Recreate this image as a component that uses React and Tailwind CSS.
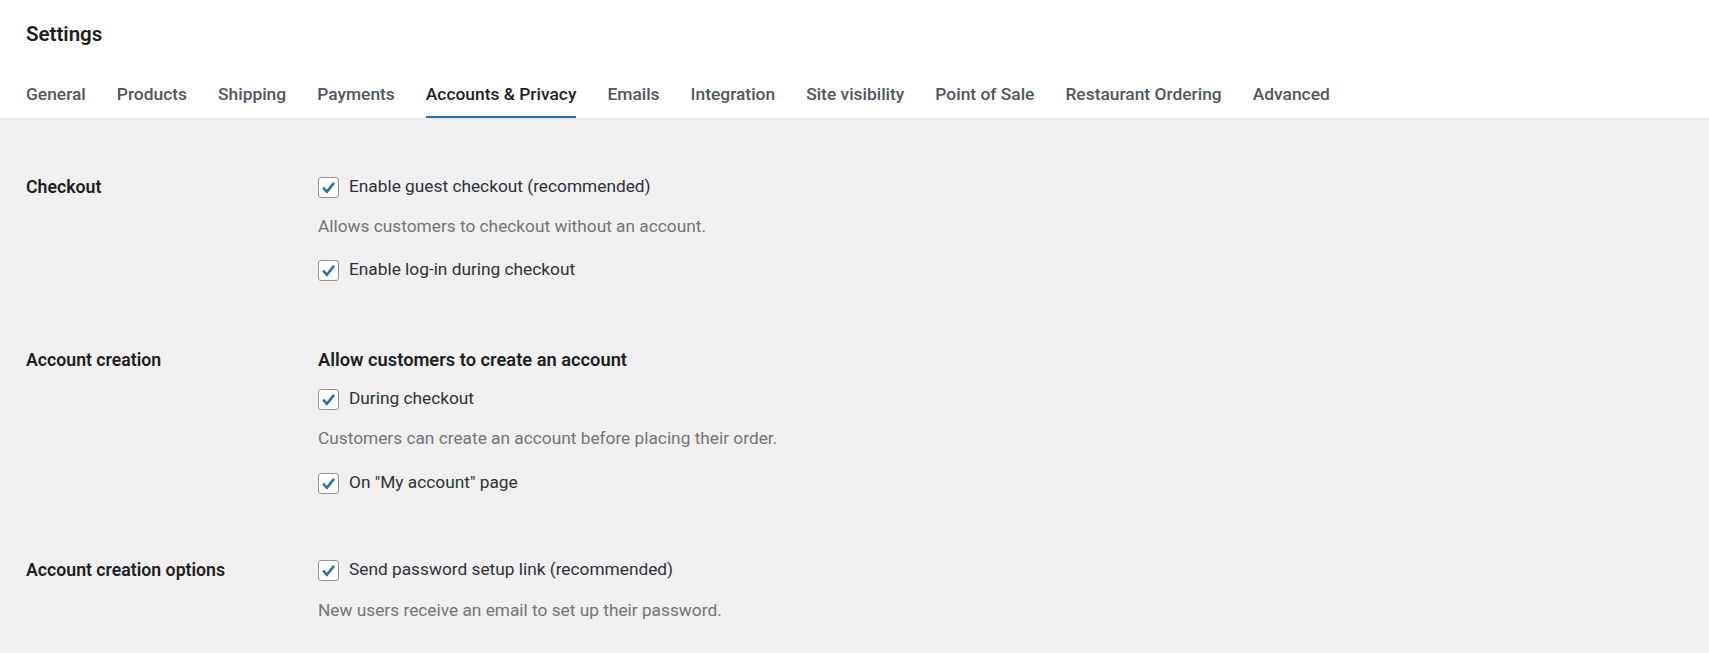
import React from "react";

const font = { fontFamily: 'Roboto, "Noto Sans", sans-serif' };

function Check() {
  return (
    <span className="flex h-[21px] w-[21px] shrink-0 items-center justify-center rounded-[3px] border border-[#949494] bg-white">
      <svg viewBox="0 0 21 21" className="h-[21px] w-[21px]">
        <path d="M4.6 10.6 L8.7 15.2 L16.6 5.4" fill="none" stroke="#2271b1" strokeWidth="2.8" strokeLinecap="butt" strokeLinejoin="miter" />
      </svg>
    </span>
  );
}

function CheckRow({ label, className = "" }) {
  return (
    <div className={"flex h-[28px] items-center gap-[10px] " + className}>
      <Check />
      <span className="text-[17.3px] text-[#2c3338]">{label}</span>
    </div>
  );
}

function Desc({ children, className = "" }) {
  return <div className={"flex h-[24px] items-center text-[17.3px] text-[#757575] " + className}>{children}</div>;
}

const tabs = [
  "General",
  "Products",
  "Shipping",
  "Payments",
  "Accounts & Privacy",
  "Emails",
  "Integration",
  "Site visibility",
  "Point of Sale",
  "Restaurant Ordering",
  "Advanced",
];

export default function App() {
  return (
    <div className="min-h-[653px] w-full bg-[#f0f0f0]" style={font}>
      <div className="border-b border-[#e6e6e6] bg-white px-[26px]">
        <div className="flex h-[50px] items-end text-[20.5px] font-semibold text-[#1e1e1e]">Settings</div>
        <div className="mt-[19px] flex h-[49px] gap-[31px]">
          {tabs.map((t) => {
            const active = t === "Accounts & Privacy";
            return (
              <div
                key={t}
                className={
                  "flex h-full items-center border-b-2 pt-[4px] text-[17.4px] font-medium " +
                  (active ? "border-[#2271b1] text-[#1e1e1e]" : "border-transparent text-[#50575e]")
                }
              >
                {t}
              </div>
            );
          })}
        </div>
      </div>

      <div className="px-[26px] pt-[54px]">
        <div className="grid grid-cols-[292px_1fr]">
          <div className="flex h-[28px] items-center text-[17.7px] font-semibold text-[#1e1e1e]">Checkout</div>
          <div className="flex flex-col">
            <CheckRow label="Enable guest checkout (recommended)" />
            <Desc className="mt-[14px]">Allows customers to checkout without an account.</Desc>
            <CheckRow label="Enable log-in during checkout" className="mt-[17px]" />
          </div>
        </div>

        <div className="mt-[62px] grid grid-cols-[292px_1fr]">
          <div className="flex h-[28px] items-center text-[17.7px] font-semibold text-[#1e1e1e]">Account creation</div>
          <div className="flex flex-col">
            <div className="flex h-[28px] items-center text-[18.3px] font-semibold text-[#1e1e1e]">Allow customers to create an account</div>
            <CheckRow label="During checkout" className="mt-[11px]" />
            <Desc className="mt-[14px]">Customers can create an account before placing their order.</Desc>
            <CheckRow label={'On "My account" page'} className="mt-[18px]" />
          </div>
        </div>

        <div className="mt-[59px] grid grid-cols-[292px_1fr]">
          <div className="flex h-[28px] items-center text-[17.7px] font-semibold text-[#1e1e1e]">Account creation options</div>
          <div className="flex flex-col">
            <CheckRow label="Send password setup link (recommended)" />
            <Desc className="mt-[15px]">New users receive an email to set up their password.</Desc>
          </div>
        </div>
      </div>
    </div>
  );
}
